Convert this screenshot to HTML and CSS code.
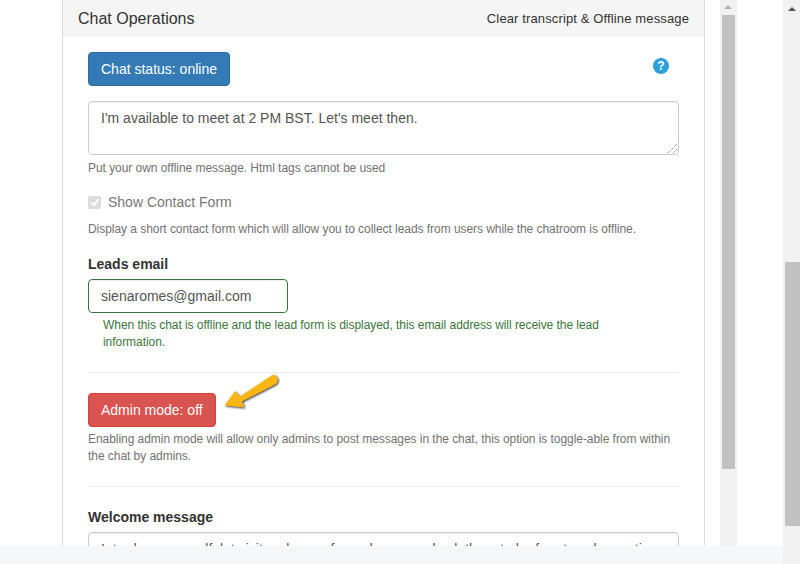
FILE: index.html
```html
<!DOCTYPE html>
<html lang="en">
<head>
    <meta charset="UTF-8">
    <title>Chat Operations</title>
    <link rel="stylesheet" href="styles.css">
</head>
<body>
    <div class="page">
        <div class="main">
            <div class="panel">
                <div class="panel-heading">
                    <span class="panel-title">Chat Operations</span>
                    <span class="panel-link">Clear transcript &amp; Offline message</span>
                </div>
                <div class="panel-body">
                    <div class="status-row">
                        <button class="btn btn-blue">Chat status: online</button>
                        <span class="help-icon">?</span>
                    </div>
                    <textarea class="field offline-msg">I'm available to meet at 2 PM BST. Let's meet then.</textarea>
                    <svg class="resize-grip" width="11" height="11" viewBox="0 0 11 11">
                        <path d="M1 10 L10 1 M6 10 L10 6" stroke="#666" stroke-width="1" stroke-dasharray="1 1" fill="none"/>
                    </svg>
                    <p class="help help-first">Put your own offline message. Html tags cannot be used</p>

                    <div class="check-row">
                        <span class="checkbox">
                            <svg width="10" height="10" viewBox="0 0 10 10">
                                <path d="M1.5 5.5 L4 8 L8.5 2" stroke="#fff" stroke-width="2" fill="none"/>
                            </svg>
                        </span>
                        <span class="check-label">Show Contact Form</span>
                    </div>
                    <p class="help help-contact">Display a short contact form which will allow you to collect leads from users while the chatroom is offline.</p>

                    <label class="label label-leads">Leads email</label>
                    <input class="field email" type="text" value="sienaromes@gmail.com">
                    <p class="help help-green">When this chat is offline and the lead form is displayed, this email address will receive the lead information.</p>

                    <hr class="rule rule-first">

                    <div class="admin-row">
                        <button class="btn btn-red">Admin mode: off</button>
                        <svg class="arrow" width="62" height="40" viewBox="0 0 62 40">
                            <path d="M4.500 32.500 L15 18 L20 23.500 L51.500 2.500 C55 0.500 59 4.500 57.500 8.500 C57 10 56.500 10.500 55 11.500 L22 28.500 L24.500 34.500 Z" fill="#fcb614"/>
                        </svg>
                    </div>
                    <p class="help help-admin">Enabling admin mode will allow only admins to post messages in the chat, this option is toggle-able from within the chat by admins.</p>

                    <hr class="rule rule-second">

                    <label class="label label-welcome">Welcome message</label>
                    <textarea class="field welcome-msg">Introduce yourself, let visitors know of your hours, and ask them to be free to ask questions</textarea>
                </div>
            </div>
            <div class="scrollbar inner-scroll">
                <span class="arrow-up arrow-grey"></span>
                <div class="thumb inner-thumb"></div>
            </div>
        </div>
        <div class="bottom-bar"></div>
    </div>
    <div class="scrollbar outer-scroll">
        <span class="arrow-up arrow-dark"></span>
        <div class="thumb outer-thumb"></div>
    </div>
</body>
</html>
```

FILE: styles.css
```css
* {
    box-sizing: border-box;
}

html, body {
    margin: 0;
    height: 564px;
    overflow: hidden;
}

body {
    display: flex;
    font-family: "Liberation Sans", Arial, sans-serif;
    font-size: 14px;
    color: #333;
    background-color: #fff;
}

.page {
    width: 783px;
    display: flex;
    flex-direction: column;
}

.main {
    height: 546px;
    display: flex;
    overflow: hidden;
    padding-left: 62px;
}

.bottom-bar {
    height: 18px;
    background-color: #f6f7f9;
}

.panel {
    width: 643px;
    flex: none;
    border-left: 1px solid #ddd;
    border-right: 1px solid #ddd;
}

.panel-heading {
    height: 37px;
    display: flex;
    justify-content: space-between;
    align-items: center;
    padding: 0 15px;
    background-color: #f5f5f5;
}

.panel-title {
    font-size: 16px;
}

.panel-link {
    font-size: 13px;
    letter-spacing: 0.13px;
}

.panel-body {
    position: relative;
    padding: 15px 25px 0;
}

.status-row {
    display: flex;
    justify-content: space-between;
    align-items: flex-start;
    padding-right: 10px;
}

.btn {
    height: 34px;
    padding: 0 12px;
    font-family: inherit;
    font-size: 14px;
    color: #fff;
    border-radius: 4px;
    border: 1px solid transparent;
}

.btn-blue {
    background-color: #337ab7;
    border-color: #2e6da4;
}

.btn-red {
    background-color: #d9534f;
    border-color: #d43f3a;
}

.help-icon {
    width: 16px;
    height: 16px;
    margin-top: 6px;
    border-radius: 50%;
    background-color: #2d9fdf;
    color: #fff;
    font-size: 12px;
    font-weight: bold;
    line-height: 16px;
    text-align: center;
}

.field {
    display: block;
    font-family: inherit;
    font-size: 14px;
    color: #555;
    padding: 6px 12px;
    background-color: #fff;
    border: 1px solid #ccc;
    border-radius: 4px;
    box-shadow: inset 0 1px 1px rgba(0, 0, 0, .075);
    line-height: 20px;
}

.offline-msg {
    width: 591px;
    height: 54px;
    margin-top: 15px;
    resize: none;
}

.resize-grip {
    position: absolute;
    left: 604px;
    top: 106px;
}

.help {
    margin: 0;
    font-size: 12px;
    line-height: 17px;
    letter-spacing: -0.05px;
    color: #737373;
}

.help-first {
    margin-top: 5px;
}

.check-row {
    display: flex;
    align-items: center;
    gap: 7px;
    margin-top: 15px;
    height: 20px;
}

.checkbox {
    width: 13px;
    height: 13px;
    display: flex;
    align-items: center;
    justify-content: center;
    background-color: #dcdcdc;
    border-radius: 2px;
}

.check-label {
    color: #777;
}

.help-contact {
    margin-top: 9px;
}

.label {
    display: block;
    font-weight: bold;
    line-height: 20px;
}

.label-leads {
    margin-top: 16px;
}

.email {
    width: 200px;
    height: 34px;
    margin-top: 5px;
    border-color: #3c763d;
}

.help-green {
    margin-top: 4px;
    padding: 0 40px 0 15px;
    color: #3c763d;
}

.rule {
    margin: 0;
    border: 0;
    border-top: 1px solid #eee;
}

.rule-first {
    margin-top: 21px;
}

.admin-row {
    position: relative;
    margin-top: 20px;
}

.arrow {
    position: absolute;
    left: 132px;
    top: -20px;
    filter: drop-shadow(1px 1.5px 1px rgba(0, 0, 0, .75));
}

.help-admin {
    margin-top: 4px;
}

.rule-second {
    margin-top: 21px;
}

.label-welcome {
    margin-top: 20px;
}

.welcome-msg {
    width: 591px;
    height: 54px;
    margin-top: 5px;
    resize: none;
    overflow: hidden;
}

.scrollbar {
    position: relative;
    width: 17px;
    flex: none;
    background-color: #f1f1f1;
}

.inner-scroll {
    margin-left: 15px;
}

.arrow-up {
    position: absolute;
    left: 4px;
    width: 0;
    height: 0;
    border-left: 4px solid transparent;
    border-right: 4px solid transparent;
}

.arrow-grey {
    top: 5px;
    border-bottom: 4px solid #b5b5b5;
}

.arrow-dark {
    left: 5px;
    top: 7px;
    border-bottom: 4px solid #505050;
}

.thumb {
    position: absolute;
    background-color: #c1c1c1;
}

.inner-thumb {
    left: 2px;
    right: 2px;
    top: 15px;
    height: 454px;
}

.outer-thumb {
    left: 2px;
    right: 0;
    top: 262px;
    height: 264px;
}
```
